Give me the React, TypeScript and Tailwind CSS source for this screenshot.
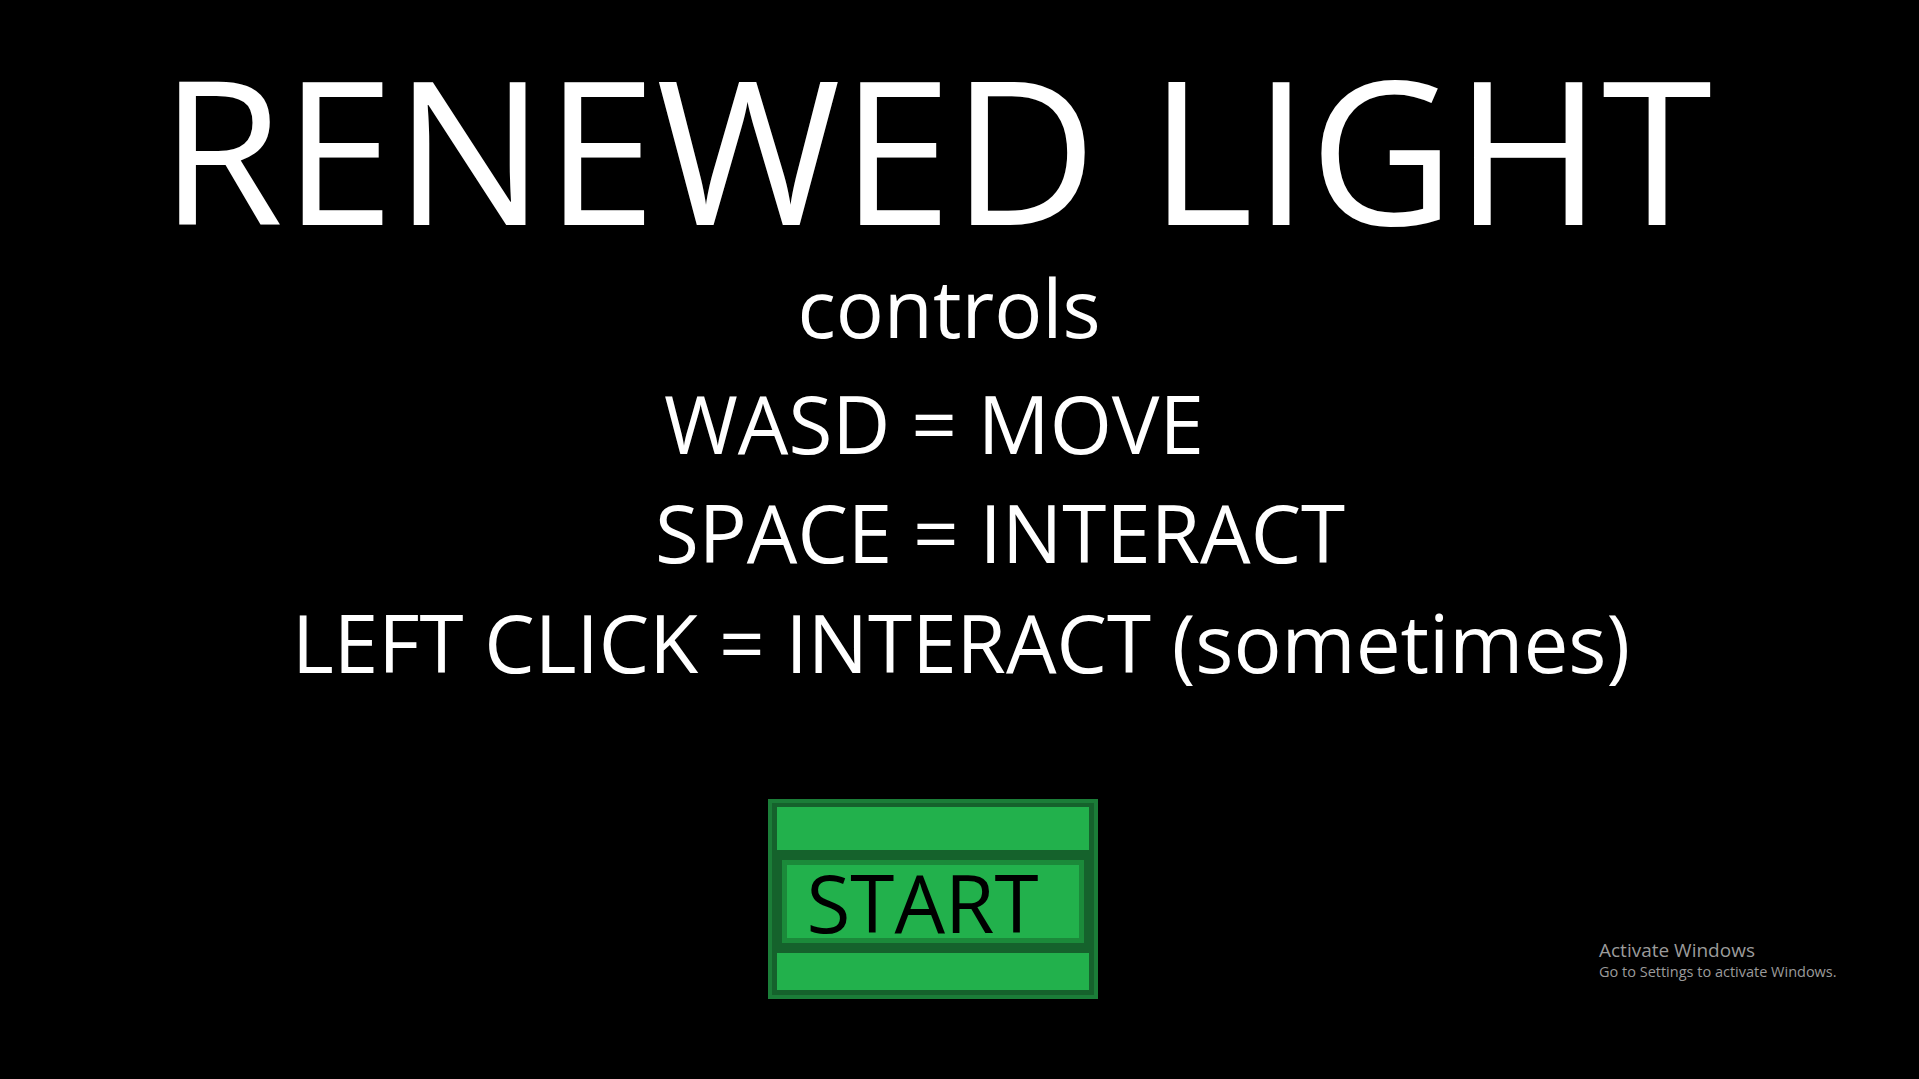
export default function App() {
  const font = { fontFamily: '"Open Sans", "Noto Sans", sans-serif' }
  return (
    <div className="relative w-full h-[1079px] bg-black text-white overflow-hidden" style={font}>
      <div className="flex flex-col items-stretch pt-[48px]">
        <div className="text-center text-[200px] leading-[200px] pr-[47px] whitespace-nowrap">RENEWED LIGHT</div>
        <div className="text-center text-[80px] leading-[110px] mt-[4px] pr-[21px] whitespace-nowrap">controls</div>
        <div className="text-center text-[80px] leading-[110px] mt-[6px] pr-[51px] whitespace-nowrap">WASD = MOVE</div>
        <div className="text-center text-[80px] leading-[110px] mt-[-1px] pl-[81px] whitespace-nowrap">SPACE = INTERACT</div>
        <div className="text-center text-[80px] leading-[110px] pl-[3px] whitespace-nowrap">LEFT CLICK = INTERACT (sometimes)</div>

        <div className="flex justify-center mt-[102px] pr-[54px]">
          <button className="w-[330px] h-[200px] border-4 border-[#1b7d38] bg-[#15622c] flex flex-col gap-[10px] pt-[4px] px-[5px] pb-[5px]">
            <div className="h-[43px] bg-[#22b14c]" />
            <div className="h-[83px] mx-[5px] border-[5px] border-[#1b8a3a] bg-[#22b14c] text-black text-left text-[80px] leading-[73px] pl-[20px]">
              START
            </div>
            <div className="flex-1 bg-[#22b14c]" />
          </button>
        </div>
      </div>

      <div className="absolute left-[1599px] top-[938px] text-[#9b9b9b]">
        <div className="text-[19px] leading-[24px]">Activate Windows</div>
        <div className="text-[14.5px] leading-[20px]">Go to Settings to activate Windows.</div>
      </div>
    </div>
  )
}
